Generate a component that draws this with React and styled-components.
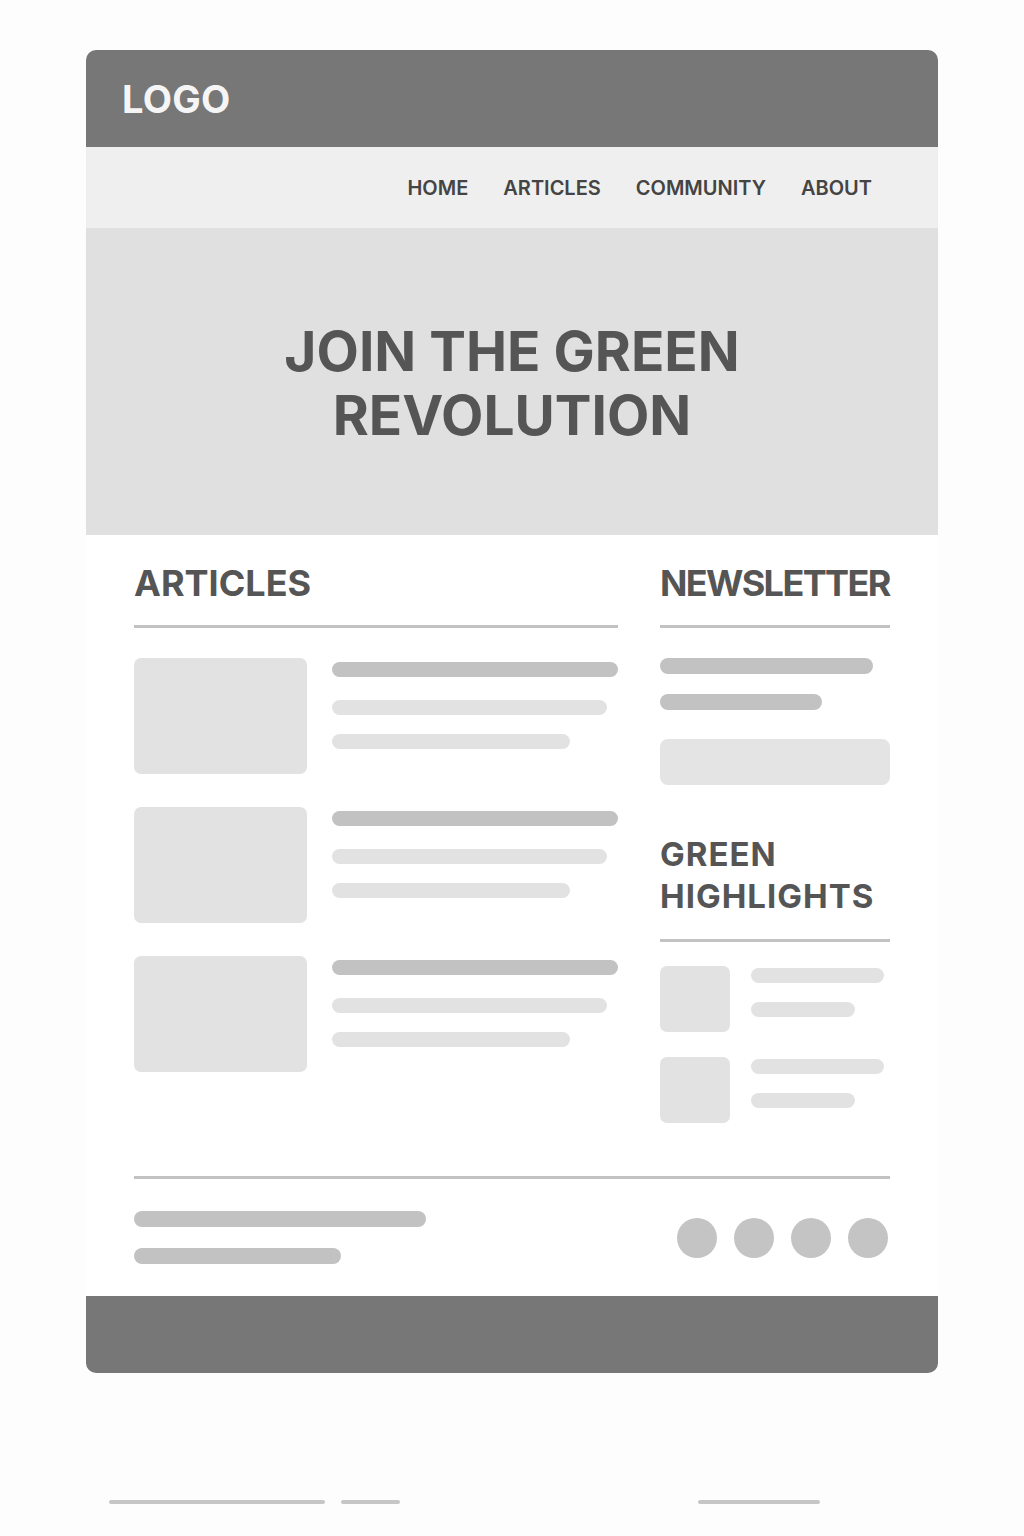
import React from 'react';
import styled, {createGlobalStyle} from 'styled-components';

const GlobalStyle = createGlobalStyle`
    html, body {
        margin: 0;
        padding: 0;
        background: #fdfdfd;
        font-family: 'Inter', 'Noto Sans', sans-serif;
    }
`;

const Page = styled.div`
    width: 1024px;
    min-height: 1536px;
    padding: 50px 86px 0 86px;
    box-sizing: border-box;
`;

const Card = styled.div`
    width: 852px;
    background: #ffffff;
    border-radius: 10px;
    overflow: hidden;
    display: flex;
    flex-direction: column;
`;

const Header = styled.header`
    height: 97px;
    background: #777777;
    display: flex;
    align-items: center;
    padding: 0 36px;
`;

const Logo = styled.div`
    color: #f5f5f5;
    font-size: 38px;
    font-weight: 700;
    letter-spacing: 0.3px;
`;

const Nav = styled.nav`
    height: 81px;
    background: #efefef;
    display: flex;
    justify-content: flex-end;
    align-items: center;
    gap: 35px;
    padding-right: 66px;
`;

const NavItem = styled.a`
    color: #444444;
    font-size: 20px;
    font-weight: 600;
`;

const Hero = styled.section`
    height: 307px;
    background: #e0e0e0;
    display: flex;
    align-items: center;
    justify-content: center;
`;

const HeroTitle = styled.h1`
    margin: 3px 0 0 0;
    text-align: center;
    color: #555555;
    font-size: 55px;
    line-height: 64px;
    font-weight: 700;
    letter-spacing: 0;
`;

const Main = styled.main`
    display: grid;
    grid-template-columns: 484px 230px;
    column-gap: 42px;
    padding: 26px 48px 0 48px;
`;

const Column = styled.div`
    display: flex;
    flex-direction: column;
`;

const SectionTitle = styled.h2`
    margin: 0;
    color: #555555;
    font-size: ${p => p.$size || 36}px;
    line-height: ${p => p.$lh || 44}px;
    font-weight: 700;
    letter-spacing: ${p => p.$ls || 0}px;
`;

const Rule = styled.div`
    height: 3px;
    background: #c2c2c2;
    margin-top: ${p => p.$top ?? 20}px;
`;

const ArticleList = styled.div`
    display: flex;
    flex-direction: column;
    gap: 33px;
    margin-top: 30px;
`;

const ArticleRow = styled.div`
    display: flex;
    gap: 25px;
`;

const Thumb = styled.div`
    width: ${p => p.$w}px;
    height: ${p => p.$h}px;
    flex-shrink: 0;
    background: #e2e2e2;
    border-radius: 7px;
`;

const Lines = styled.div`
    display: flex;
    flex-direction: column;
    gap: ${p => p.$gap}px;
    padding-top: ${p => p.$top || 0}px;
`;

const Bar = styled.div`
    width: ${p => p.$w}px;
    height: ${p => p.$h || 15}px;
    margin-bottom: ${p => p.$mb || 0}px;
    background: ${p => (p.$dark ? '#c2c2c2' : '#e2e2e2')};
    border-radius: 8px;
`;

const NewsLines = styled(Lines)`
    margin-top: 30px;
`;

const Input = styled.div`
    height: 46px;
    margin-top: 29px;
    background: #e4e4e4;
    border-radius: 8px;
`;

const HighlightsBlock = styled.div`
    margin-top: 48px;
    display: flex;
    flex-direction: column;
`;

const HighlightList = styled.div`
    display: flex;
    flex-direction: column;
    gap: 25px;
    margin-top: 24px;
`;

const HighlightRow = styled.div`
    display: flex;
    gap: 21px;
`;

const Footer = styled.footer`
    padding: 0 48px;
    margin-top: 53px;
`;

const FooterRow = styled.div`
    display: flex;
    justify-content: space-between;
    align-items: center;
    padding: 32px 0 32px 0;
`;

const Socials = styled.div`
    display: flex;
    gap: 17px;
    margin-right: 2px;
`;

const Dot = styled.div`
    width: 40px;
    height: 40px;
    border-radius: 50%;
    background: #c4c4c4;
`;

const BottomBar = styled.div`
    height: 77px;
    background: #777777;
`;

const Ghost = styled.div`
    display: flex;
    gap: 16px;
    margin-top: 127px;
    padding-left: 23px;
`;

const GhostBar = styled.div`
    width: ${p => p.$w}px;
    height: 4px;
    margin-left: ${p => p.$ml || 0}px;
    background: #c6c6c6;
    border-radius: 2px;
`;

const articles = [1, 2, 3];
const highlights = [1, 2];

const App = () => (
    <Page>
        <GlobalStyle/>
        <Card>
            <Header><Logo>LOGO</Logo></Header>
            <Nav>
                <NavItem>HOME</NavItem>
                <NavItem>ARTICLES</NavItem>
                <NavItem>COMMUNITY</NavItem>
                <NavItem>ABOUT</NavItem>
            </Nav>
            <Hero><HeroTitle>JOIN THE GREEN<br/>REVOLUTION</HeroTitle></Hero>
            <Main>
                <Column>
                    <SectionTitle>ARTICLES</SectionTitle>
                    <Rule/>
                    <ArticleList>
                        {articles.map(a => (
                            <ArticleRow key={a}>
                                <Thumb $w={173} $h={116}/>
                                <Lines $gap={19} $top={4}>
                                    <Bar $dark $w={286} $mb={4}/>
                                    <Bar $w={275}/>
                                    <Bar $w={238}/>
                                </Lines>
                            </ArticleRow>
                        ))}
                    </ArticleList>
                </Column>
                <Column>
                    <SectionTitle $ls={-1.6}>NEWSLETTER</SectionTitle>
                    <Rule/>
                    <NewsLines $gap={20}>
                        <Bar $dark $w={213} $h={16}/>
                        <Bar $dark $w={162} $h={16}/>
                    </NewsLines>
                    <Input/>
                    <HighlightsBlock>
                        <SectionTitle $size={33} $lh={42} $ls={1}>GREEN<br/>HIGHLIGHTS</SectionTitle>
                        <Rule $top={22}/>
                        <HighlightList>
                            {highlights.map(h => (
                                <HighlightRow key={h}>
                                    <Thumb $w={70} $h={66}/>
                                    <Lines $gap={19} $top={2}>
                                        <Bar $w={133}/>
                                        <Bar $w={104}/>
                                    </Lines>
                                </HighlightRow>
                            ))}
                        </HighlightList>
                    </HighlightsBlock>
                </Column>
            </Main>
            <Footer>
                <Rule $top={0}/>
                <FooterRow>
                    <Lines $gap={21}>
                        <Bar $dark $w={292} $h={16}/>
                        <Bar $dark $w={207} $h={16}/>
                    </Lines>
                    <Socials>
                        <Dot/><Dot/><Dot/><Dot/>
                    </Socials>
                </FooterRow>
            </Footer>
            <BottomBar/>
        </Card>
        <Ghost>
            <GhostBar $w={216}/>
            <GhostBar $w={59}/>
            <GhostBar $w={122} $ml={282}/>
        </Ghost>
    </Page>
);

export default App;
